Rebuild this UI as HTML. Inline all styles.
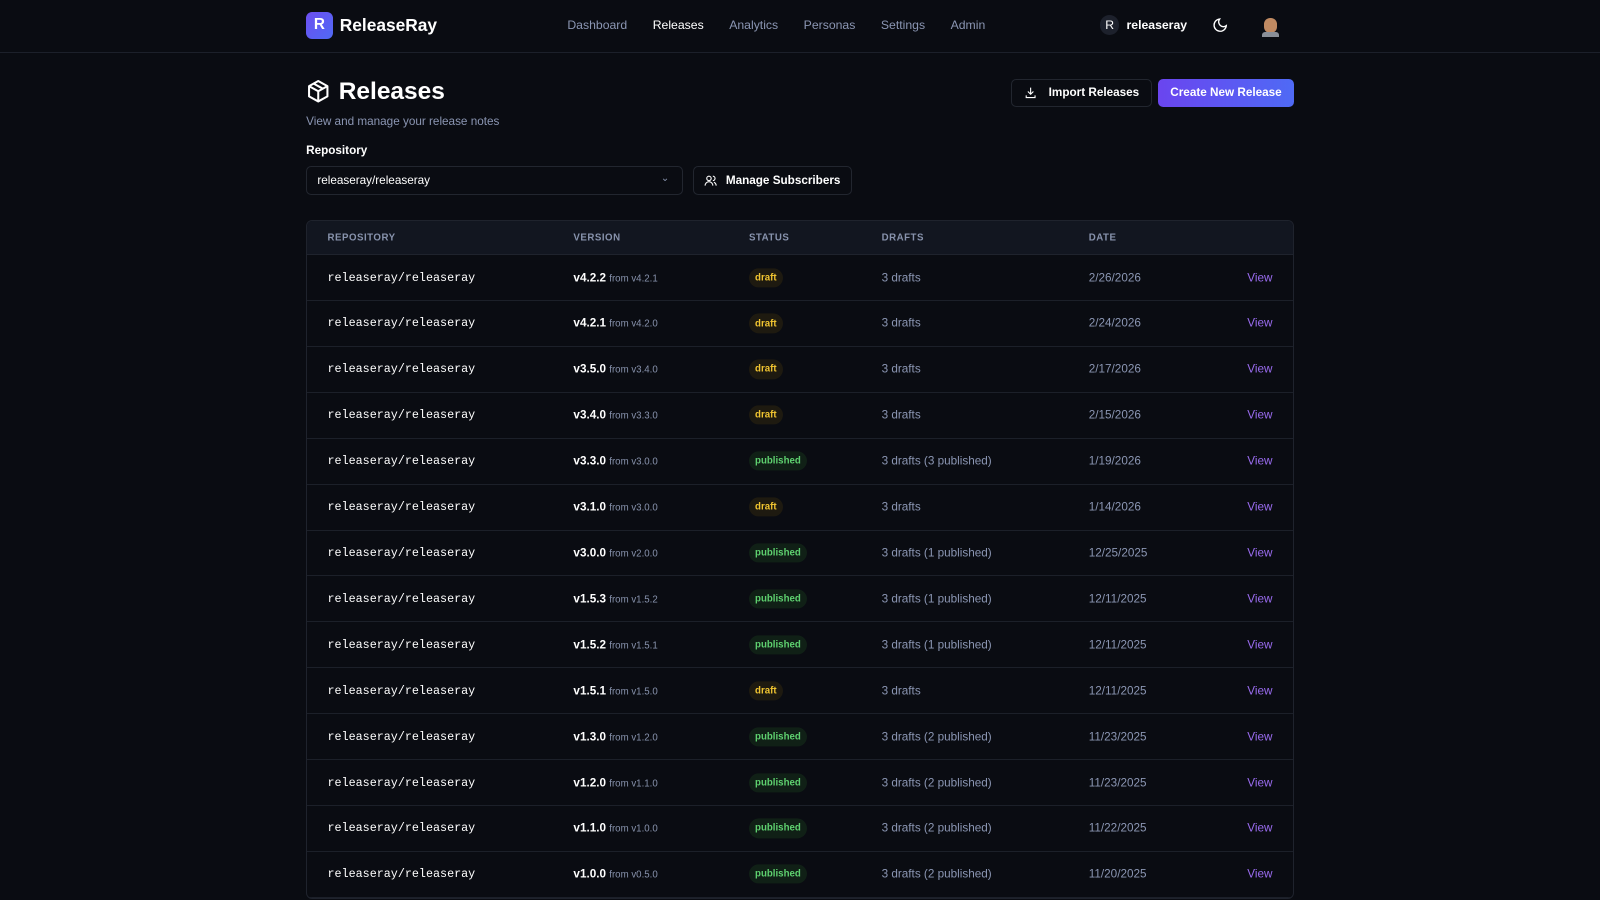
<!DOCTYPE html>
<html><head><meta charset="utf-8"><style>
*{box-sizing:border-box;margin:0;padding:0}
html,body{background:#0a0c12;overflow:hidden}
body{width:1568px;height:882px;zoom:1.0204;font-family:"Liberation Sans",sans-serif;color:#e8eaf0;position:relative}
.nav{height:52px;border-bottom:1px solid #1c202a;position:relative}
.logo{position:absolute;left:300px;top:12px;display:flex;align-items:center;gap:7px}
.logo .b{width:26px;height:26px;border-radius:6px;background:linear-gradient(135deg,#6d4ef0,#4f6af5);color:#fff;font-weight:bold;font-size:15px;display:flex;align-items:center;justify-content:center}
.logo span{font-weight:bold;font-size:17px;color:#fff}
.links{position:absolute;left:556px;top:18px;display:flex;gap:25px;font-size:12px;color:#8b96b3}
.links .a{color:#fff}
.user{position:absolute;left:1078px;top:15px;display:flex;align-items:center;gap:7px;font-size:12px;font-weight:bold;color:#fff}
.user .c{width:19px;height:19px;border-radius:50%;background:#1d212c;font-size:12px;display:flex;align-items:center;justify-content:center;font-weight:normal}
.title{position:absolute;left:300px;top:76px;display:flex;align-items:center;gap:8px;font-size:24px;font-weight:bold;color:#fff}
.sub{position:absolute;left:300px;top:113px;font-size:11.5px;color:#8b96b3}
.btn{position:absolute;height:28px;border-radius:5px;font-size:11.5px;font-weight:bold;display:flex;align-items:center;justify-content:center;gap:8px}
.lbl{position:absolute;left:300px;top:141px;font-size:11.5px;font-weight:bold;color:#fff}
.sel{position:absolute;left:300px;top:163px;width:369px;height:28px;border:1px solid #22262f;border-radius:5px;font-size:11.5px;padding:7px 10px;color:#fff}
.tbl{position:absolute;left:300px;top:216px;width:968px;border:1px solid #1f232d;border-radius:6px;overflow:hidden}
.hd{height:33px;background:#121620;font-size:9.5px;font-weight:bold;letter-spacing:.5px;color:#8893ad;position:relative;border-bottom:1px solid #1f232d}
.row{height:45px;border-bottom:1px solid #1c2029;position:relative;font-size:11.5px}
.hd div,.row div{position:absolute;top:50%;transform:translateY(-50%)}
.c1{left:20px}.c2{left:261px}.c3{left:433px}.c4{left:563px}.c5{left:766px}.c6{right:20px}
.mono{font-family:"Liberation Mono",monospace;font-size:11.5px;color:#fff}
.v{font-weight:bold;color:#fff}.v small{font-weight:normal;font-size:9.5px;color:#8893ad}
.d{color:#8b96b3}
.pill{font-size:9.5px;font-weight:bold;padding:4px 6px;border-radius:10px}
.dr{color:#f0c431;background:#1e1a10}.pb{color:#5ed06f;background:#102016}
.view{color:#9a6cf0}
</style></head><body>
<div class="nav">
<div class="logo"><div class="b">R</div><span>ReleaseRay</span></div>
<div class="links"><span>Dashboard</span><span class="a">Releases</span><span>Analytics</span><span>Personas</span><span>Settings</span><span>Admin</span></div>
<div class="user"><div class="c">R</div>releaseray</div>
<svg style="position:absolute;left:1188px;top:17px" width="16" height="16" viewBox="0 0 24 24" fill="none" stroke="#fff" stroke-width="2"><path d="M21 12.8A9 9 0 1 1 11.2 3a7 7 0 0 0 9.8 9.8z"/></svg>
<div style="position:absolute;left:1239px;top:18px;width:12px;height:14px;border-radius:6px;background:#c08a62"></div>
<div style="position:absolute;left:1237px;top:31px;width:16px;height:5px;border-radius:3px 3px 0 0;background:#8a8f98"></div>
</div>
<div class="title"><svg width="24" height="24" viewBox="0 0 24 24" fill="none" stroke="#fff" stroke-width="2" stroke-linejoin="round"><path d="M12 2l9 5v10l-9 5-9-5V7z"/><path d="M3 7l9 5 9-5M12 12v10M7.5 4.5l9 5"/></svg>Releases</div>
<div class="sub">View and manage your release notes</div>
<div class="btn" style="left:991px;top:77px;width:138px;border:1px solid #22262f;color:#fff"><svg width="13" height="13" viewBox="0 0 24 24" fill="none" stroke="#fff" stroke-width="2"><path d="M12 3v12M7 10l5 5 5-5M4 17v4h16v-4"/></svg>&nbsp;Import Releases</div>
<div class="btn" style="left:1135px;top:77px;width:133px;background:linear-gradient(90deg,#6a45ef,#4f6af5);color:#fff">Create New Release</div>
<div class="lbl">Repository</div>
<div class="sel">releaseray/releaseray<span style="position:absolute;right:12px;top:6px;color:#8893ad;font-size:10px">&#8964;</span></div>
<div class="btn" style="left:679px;top:163px;width:156px;border:1px solid #22262f;color:#fff"><svg width="13" height="13" viewBox="0 0 24 24" fill="none" stroke="#fff" stroke-width="2"><circle cx="9" cy="8" r="4"/><path d="M2 21a7 7 0 0 1 14 0M16 4a4 4 0 0 1 0 8M22 21a7 7 0 0 0-4-6"/></svg>Manage Subscribers</div>
<div class="tbl">
<div class="hd"><div class="c1">REPOSITORY</div><div class="c2">VERSION</div><div class="c3">STATUS</div><div class="c4">DRAFTS</div><div class="c5">DATE</div></div>
<div class="row"><div class="c1 mono">releaseray/releaseray</div><div class="c2 v">v4.2.2 <small>from v4.2.1</small></div><div class="c3 pill dr">draft</div><div class="c4 d">3 drafts</div><div class="c5 d">2/26/2026</div><div class="c6 view">View</div></div>
<div class="row"><div class="c1 mono">releaseray/releaseray</div><div class="c2 v">v4.2.1 <small>from v4.2.0</small></div><div class="c3 pill dr">draft</div><div class="c4 d">3 drafts</div><div class="c5 d">2/24/2026</div><div class="c6 view">View</div></div>
<div class="row"><div class="c1 mono">releaseray/releaseray</div><div class="c2 v">v3.5.0 <small>from v3.4.0</small></div><div class="c3 pill dr">draft</div><div class="c4 d">3 drafts</div><div class="c5 d">2/17/2026</div><div class="c6 view">View</div></div>
<div class="row"><div class="c1 mono">releaseray/releaseray</div><div class="c2 v">v3.4.0 <small>from v3.3.0</small></div><div class="c3 pill dr">draft</div><div class="c4 d">3 drafts</div><div class="c5 d">2/15/2026</div><div class="c6 view">View</div></div>
<div class="row"><div class="c1 mono">releaseray/releaseray</div><div class="c2 v">v3.3.0 <small>from v3.0.0</small></div><div class="c3 pill pb">published</div><div class="c4 d">3 drafts (3 published)</div><div class="c5 d">1/19/2026</div><div class="c6 view">View</div></div>
<div class="row"><div class="c1 mono">releaseray/releaseray</div><div class="c2 v">v3.1.0 <small>from v3.0.0</small></div><div class="c3 pill dr">draft</div><div class="c4 d">3 drafts</div><div class="c5 d">1/14/2026</div><div class="c6 view">View</div></div>
<div class="row"><div class="c1 mono">releaseray/releaseray</div><div class="c2 v">v3.0.0 <small>from v2.0.0</small></div><div class="c3 pill pb">published</div><div class="c4 d">3 drafts (1 published)</div><div class="c5 d">12/25/2025</div><div class="c6 view">View</div></div>
<div class="row"><div class="c1 mono">releaseray/releaseray</div><div class="c2 v">v1.5.3 <small>from v1.5.2</small></div><div class="c3 pill pb">published</div><div class="c4 d">3 drafts (1 published)</div><div class="c5 d">12/11/2025</div><div class="c6 view">View</div></div>
<div class="row"><div class="c1 mono">releaseray/releaseray</div><div class="c2 v">v1.5.2 <small>from v1.5.1</small></div><div class="c3 pill pb">published</div><div class="c4 d">3 drafts (1 published)</div><div class="c5 d">12/11/2025</div><div class="c6 view">View</div></div>
<div class="row"><div class="c1 mono">releaseray/releaseray</div><div class="c2 v">v1.5.1 <small>from v1.5.0</small></div><div class="c3 pill dr">draft</div><div class="c4 d">3 drafts</div><div class="c5 d">12/11/2025</div><div class="c6 view">View</div></div>
<div class="row"><div class="c1 mono">releaseray/releaseray</div><div class="c2 v">v1.3.0 <small>from v1.2.0</small></div><div class="c3 pill pb">published</div><div class="c4 d">3 drafts (2 published)</div><div class="c5 d">11/23/2025</div><div class="c6 view">View</div></div>
<div class="row"><div class="c1 mono">releaseray/releaseray</div><div class="c2 v">v1.2.0 <small>from v1.1.0</small></div><div class="c3 pill pb">published</div><div class="c4 d">3 drafts (2 published)</div><div class="c5 d">11/23/2025</div><div class="c6 view">View</div></div>
<div class="row"><div class="c1 mono">releaseray/releaseray</div><div class="c2 v">v1.1.0 <small>from v1.0.0</small></div><div class="c3 pill pb">published</div><div class="c4 d">3 drafts (2 published)</div><div class="c5 d">11/22/2025</div><div class="c6 view">View</div></div>
<div class="row"><div class="c1 mono">releaseray/releaseray</div><div class="c2 v">v1.0.0 <small>from v0.5.0</small></div><div class="c3 pill pb">published</div><div class="c4 d">3 drafts (2 published)</div><div class="c5 d">11/20/2025</div><div class="c6 view">View</div></div>
</div>
</body></html>
